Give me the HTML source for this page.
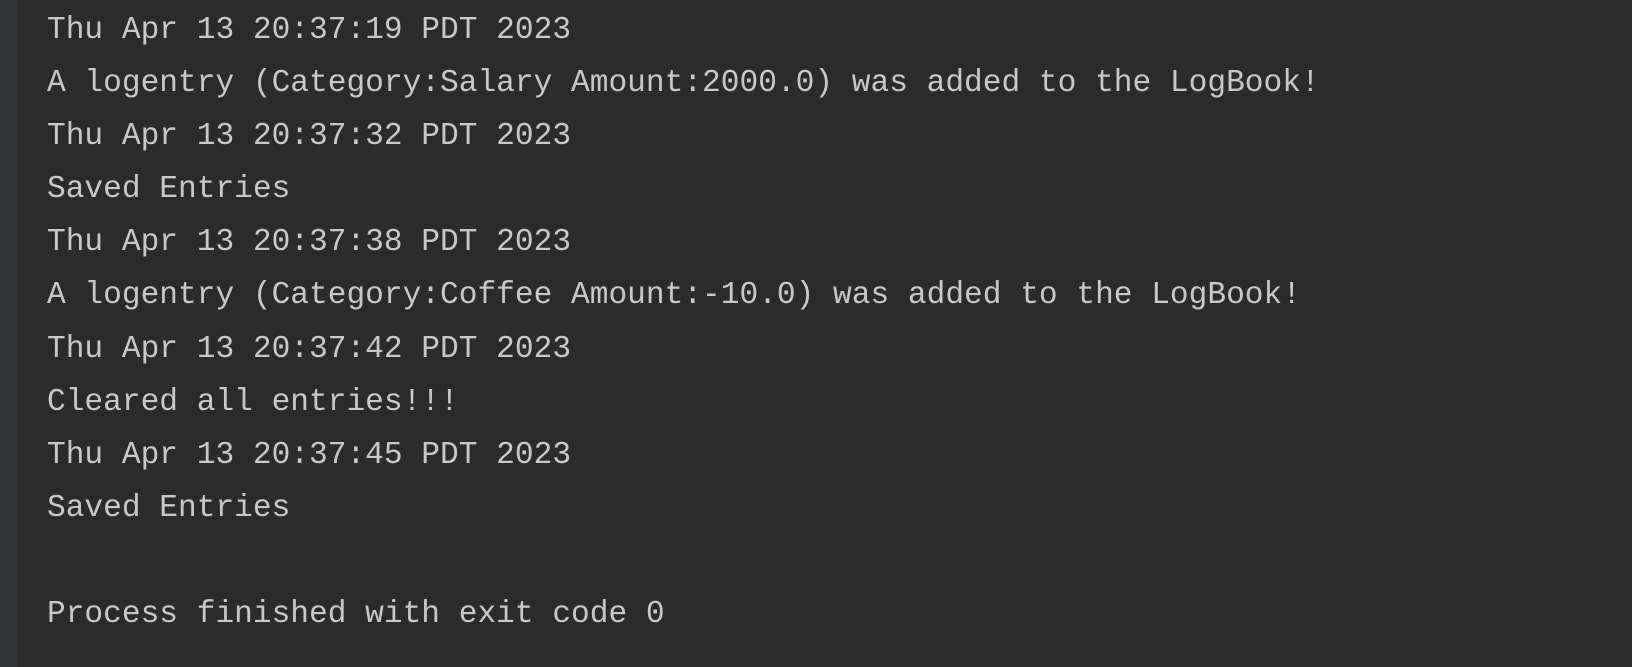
<!DOCTYPE html>
<html><head><style>
html,body{margin:0;padding:0;}
body{width:1632px;height:667px;background:#2b2b2b;position:relative;overflow:hidden;}
.strip{position:absolute;left:0;top:0;width:18px;height:667px;background:#313335;}
pre{position:absolute;left:47px;top:4px;margin:0;font-family:"Liberation Mono",monospace;font-size:31.2px;line-height:53.1px;color:#c8c8c8;}
</style></head><body>
<div class="strip"></div>
<pre>Thu Apr 13 20:37:19 PDT 2023
A logentry (Category:Salary Amount:2000.0) was added to the LogBook!
Thu Apr 13 20:37:32 PDT 2023
Saved Entries
Thu Apr 13 20:37:38 PDT 2023
A logentry (Category:Coffee Amount:-10.0) was added to the LogBook!
Thu Apr 13 20:37:42 PDT 2023
Cleared all entries!!!
Thu Apr 13 20:37:45 PDT 2023
Saved Entries

Process finished with exit code 0</pre>
</body></html>
